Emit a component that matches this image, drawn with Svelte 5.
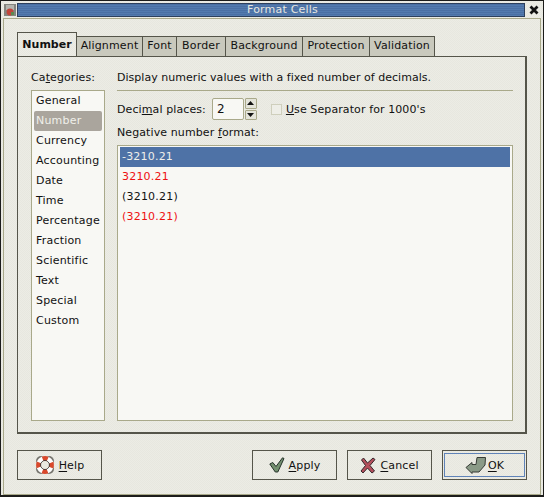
<script lang="ts">
  const tabs = ['Alignment', 'Font', 'Border', 'Background', 'Protection', 'Validation'];
  const tabWidths = [66, 34, 49, 77, 67, 65];
  const categories = ['General', 'Number', 'Currency', 'Accounting', 'Date', 'Time', 'Percentage', 'Fraction', 'Scientific', 'Text', 'Special', 'Custom'];
  const formats = [
    { label: '-3210.21', cls: 'sel' },
    { label: '3210.21', cls: 'red' },
    { label: '(3210.21)', cls: '' },
    { label: '(3210.21)', cls: 'red' },
  ];
</script>

<div class="window">
  <header class="titlebar">
    <svg class="appicon" width="12" height="12" viewBox="0 0 12 12" aria-hidden="true">
      <rect x="0" y="0" width="12" height="12" fill="#85857f" />
      <rect x="2" y="1" width="8" height="5" fill="#b5b5ae" />
      <circle cx="6" cy="8" r="3.4" fill="#c2453a" />
      <rect x="7" y="8" width="3" height="3" fill="#5c8a4e" />
    </svg>
    <div class="titlegrip"><span>Format Cells</span></div>
    <svg class="closeicon" width="14" height="14" viewBox="0 0 14 14" aria-hidden="true">
      <path d="M3.5 3.5 L10.5 10.5 M10.5 3.5 L3.5 10.5" stroke="#111" stroke-width="2.8" />
    </svg>
  </header>

  <div class="client">
    <div class="tabstrip">
      <div class="tab active">Number</div>
      {#each tabs as t, i}
        <div class="tab" style={`width:${tabWidths[i]}px`}>{t}</div>
      {/each}
    </div>

    <section class="panel">
      <div class="col-left">
        <div class="lbl cat-lbl">Ca<u>t</u>egories:</div>
        <ul class="list catlist">
          {#each categories as c}
            <li class:current={c === 'Number'}>{c}</li>
          {/each}
        </ul>
      </div>
      <div class="col-right">
        <div class="lbl desc">Display numeric values with a fixed number of decimals.</div>
        <div class="sep"></div>
        <div class="dec-row">
          <span class="lbl">Deci<u>m</u>al places:</span>
          <div class="spin">
            <div class="spin-entry">2</div>
            <div class="spin-btns">
              <div class="spin-btn"><svg width="7" height="4" viewBox="0 0 7 4"><path d="M3.5 0 L7 4 H0 Z" fill="#111" /></svg></div>
              <div class="spin-btn"><svg width="7" height="4" viewBox="0 0 7 4"><path d="M0 0 H7 L3.5 4 Z" fill="#111" /></svg></div>
            </div>
          </div>
          <span class="check"></span>
          <span class="lbl"><u>U</u>se Separator for 1000's</span>
        </div>
        <div class="lbl neg-lbl">Negative number <u>f</u>ormat:</div>
        <ul class="list fmtlist">
          {#each formats as f}
            <li class={f.cls}>{f.label}</li>
          {/each}
        </ul>
      </div>
    </section>

    <footer class="actions">
      <button class="btn help">
        <svg width="20" height="20" viewBox="0 0 20 20" aria-hidden="true">
          <rect x="1" y="1" width="18" height="18" rx="5" fill="#77766f" />
          <circle cx="10" cy="10" r="6.6" fill="none" stroke="#fff" stroke-width="4.6" />
          <circle cx="10" cy="10" r="6.6" fill="none" stroke="#d8492c" stroke-width="4.6" stroke-dasharray="5.2 5.16" stroke-dashoffset="2.6" />
          <circle cx="10" cy="10" r="4.4" fill="none" stroke="#333" stroke-width="1" />
          <circle cx="10" cy="10" r="3.9" fill="#e9e9e1" />
        </svg>
        <span><u>H</u>elp</span>
      </button>
      <div class="spacer"></div>
      <button class="btn">
        <svg width="16" height="16" viewBox="0 0 16 16" aria-hidden="true">
          <path d="M0.8 7 L3.8 5.5 L7 9.5 L13.5 0.8 L15 1.5 L8.8 15 H6.3 Z" fill="#73906f" stroke="#26322a" stroke-width="1" stroke-linejoin="round" />
        </svg>
        <span><u>A</u>pply</span>
      </button>
      <button class="btn">
        <svg width="16" height="17" viewBox="0 0 16 17" aria-hidden="true">
          <path d="M3.5 1 L7.5 6 L13 1 L15 2.5 L10 8.5 L14.5 14 L12 16 L7.5 11 L3 16 L1 14 L5.5 8.5 L1.5 3 Z" fill="#b44f5c" stroke="#35272a" stroke-width="1" stroke-linejoin="round" />
        </svg>
        <span><u>C</u>ancel</span>
      </button>
      <button class="btn ok">
        <span class="focus">
          <svg width="22" height="20" viewBox="0 0 22 20" aria-hidden="true">
            <path d="M1 12.5 L7 7.5 V9.5 H11 L12 2.5 H20.5 L20 10 L14 17 H7 V18.5 Z" fill="#8a9a87" stroke="#363b35" stroke-width="1" stroke-linejoin="round" />
          </svg>
          <span><u>O</u>K</span>
        </span>
      </button>
    </footer>
  </div>
</div>

<style>
  :global(body) {
    margin: 0;
    background: #eaeae2;
  }
  .window {
    width: 544px;
    height: 497px;
    box-sizing: border-box;
    border: 1px solid #1c1c1a;
    border-width: 1px 1px 2px 1px;
    background: repeating-conic-gradient(#ecece5 0 25%, #e7e7df 0 50%) 0 0 / 2px 2px;
    color: #111;
    font-family: "DejaVu Sans", sans-serif;
    font-size: 11px;
    display: flex;
    flex-direction: column;
    overflow: hidden;
  }
  .titlebar {
    height: 14px;
    flex: none;
    display: flex;
    align-items: center;
    margin-top: 2px;
    padding: 0 2px 0 3px;
  }
  .appicon, .closeicon {
    flex: none;
  }
  .titlegrip {
    flex: 1;
    height: 14px;
    margin-left: 1px;
    margin-right: 2px;
    padding-left: 23px;
    background: repeating-linear-gradient(#4a6fa3 0 1px, #527aae 1px 2px);
    border: 1px solid #2c3f5c;
    box-sizing: border-box;
    color: #e6e6e0;
    text-align: center;
    line-height: 12px;
    letter-spacing: 0.2px;
  }
  .client {
    flex: 1;
    margin: 1px 2px 0 2px;
    border: 1px solid #a9a98a;
    padding: 12px 13px 0 13px;
    display: flex;
    flex-direction: column;
    min-height: 0;
  }
  .tabstrip {
    display: flex;
    align-items: flex-end;
    height: 25px;
    flex: none;
  }
  .tab {
    box-sizing: border-box;
    height: 20px;
    border: 1px solid #55554a;
    border-bottom: none;
    border-left: none;
    background: #c9c9bd;
    text-align: center;
    line-height: 18px;
    letter-spacing: 0.15px;
  }
  .tab.active {
    width: 60px;
    height: 25px;
    border-left: 1px solid #55554a;
    background: transparent;
    font-weight: bold;
    line-height: 23px;
    letter-spacing: 0;
    position: relative;
    top: 1px;
  }
  .panel {
    height: 378px;
    flex: none;
    box-sizing: border-box;
    border: 1px solid #55554a;
    border-width: 1px 2px 2px 1px;
    padding: 14px 12px 11px 13px;
    display: flex;
    gap: 12px;
  }
  .col-left {
    width: 74px;
    flex: none;
    display: flex;
    flex-direction: column;
  }
  .col-right {
    flex: 1;
    display: flex;
    flex-direction: column;
    min-width: 0;
  }
  .lbl {
    letter-spacing: 0.1px;
    line-height: 13px;
    white-space: nowrap;
  }
  .cat-lbl, .desc {
    height: 13px;
  }
  .desc {
    letter-spacing: 0.03px;
  }
  .list {
    list-style: none;
    margin: 0;
    padding: 1px 2px;
    background: #f8f8f4;
    border: 1px solid #a9a98a;
    box-sizing: border-box;
    flex: 1;
    letter-spacing: 0.2px;
  }
  .list li {
    height: 20px;
    line-height: 20px;
    padding-left: 2px;
  }
  .catlist {
    margin-top: 6px;
    padding-top: 0;
  }
  .catlist li.current {
    background: #aaa59d;
    color: #f0f0ea;
    border-radius: 2px;
  }
  .sep {
    height: 1px;
    background: #a9a98a;
    margin-top: 6px;
    flex: none;
  }
  .dec-row {
    display: flex;
    align-items: center;
    margin-top: 7px;
    height: 22px;
    flex: none;
  }
  .spin {
    display: flex;
    margin-left: 6px;
    height: 22px;
  }
  .spin-entry {
    width: 32px;
    box-sizing: border-box;
    border: 1px solid #a9a98a;
    border-radius: 2px;
    background: #f8f8f4;
    padding-left: 4px;
    line-height: 20px;
    font-size: 12px;
  }
  .spin-btns {
    width: 12px;
    display: flex;
    flex-direction: column;
    gap: 1px;
    margin-left: 1px;
  }
  .spin-btn {
    flex: 1;
    border: 1px solid #a9a98a;
    border-radius: 1px;
    box-sizing: border-box;
    display: flex;
    align-items: center;
    justify-content: center;
    background: #e4e4da;
  }
  .spin-btn svg {
    display: block;
  }
  .check {
    width: 11px;
    height: 11px;
    box-sizing: border-box;
    border: 1px solid #cfcfbc;
    background: #eeeee7;
    margin-left: 14px;
    margin-right: 4px;
  }
  .neg-lbl {
    margin-top: 6px;
    height: 13px;
  }
  .fmtlist {
    margin-top: 6px;
  }
  .fmtlist .sel {
    background: #4e72a6;
    color: #eeeeea;
  }
  .fmtlist .red {
    color: #ee1111;
  }
  .actions {
    display: flex;
    gap: 10px;
    margin-top: 16px;
    height: 30px;
    flex: none;
  }
  .spacer {
    flex: 1;
  }
  .btn {
    width: 85px;
    height: 30px;
    box-sizing: border-box;
    border: 1px solid #55554a;
    background: transparent;
    font: inherit;
    color: inherit;
    letter-spacing: 0.15px;
    padding: 0;
    display: flex;
    align-items: center;
    justify-content: center;
    gap: 4px;
  }
  .btn u {
    text-underline-offset: 2px;
  }
  .focus {
    box-sizing: border-box;
    width: 81px;
    height: 24px;
    border: 1px solid #5f83b8;
    display: flex;
    align-items: center;
    justify-content: center;
    gap: 1px;
  }
</style>
